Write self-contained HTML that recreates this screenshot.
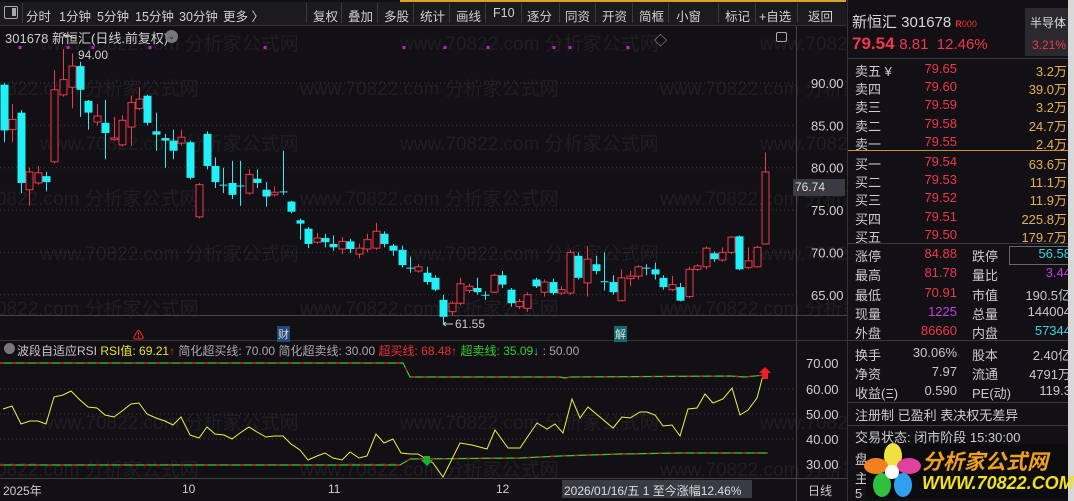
<!DOCTYPE html>
<html><head><meta charset="utf-8"><style>
*{margin:0;padding:0;box-sizing:border-box}
body{width:1074px;height:501px;background:#121014;overflow:hidden;position:relative;font-family:"Liberation Sans","Noto Sans CJK SC",sans-serif;color:#c8c8c8}
.a{position:absolute;white-space:nowrap}
#tb{left:0;top:0;width:846px;height:26px;background:#1b1b1d;border-bottom:1px solid #333}
#tb span{position:absolute;top:6px;font-size:12.5px;color:#d0d0d0}
.sep{position:absolute;top:3px;width:1px;height:20px;background:#3a3a3a}
.rp{font-size:13px}
.r{color:#f0384a}.y{color:#e8b050}.c{color:#30d8e8}.m{color:#c040e0}.w{color:#c8c8c8}
.hl{position:absolute;height:1px;background:#3a3a3a}
</style></head><body>
<div class="a" id="tb">
<div class="a" style="left:4px;top:6px;width:14px;height:13px;border:1.5px solid #aaa;border-radius:2px"><div style="position:absolute;right:1px;top:1px;width:4px;height:8px;background:#aaa"></div></div>
<div class="sep" style="left:22px"></div>
<span style="left:26px">分时</span><span style="left:59px">1分钟</span><span style="left:97px">5分钟</span><span style="left:135px">15分钟</span><span style="left:179px">30分钟</span><span style="left:223px">更多 〉</span>
<div class="sep" style="left:306px"></div><span style="left:313px">复权</span>
<div class="sep" style="left:341px"></div><span style="left:348px">叠加</span>
<div class="sep" style="left:377px"></div><span style="left:384px">多股</span>
<div class="sep" style="left:413px"></div><span style="left:420px">统计</span>
<div class="sep" style="left:449px"></div><span style="left:456px">画线</span>
<div class="sep" style="left:485px"></div><span style="left:493px">F10</span>
<div class="sep" style="left:521px"></div><span style="left:527px">逐分</span>
<div class="sep" style="left:559px"></div><span style="left:565px">同资</span>
<div class="sep" style="left:595px"></div><span style="left:602px">开资</span>
<div class="sep" style="left:632px"></div><span style="left:639px">简框</span>
<div class="sep" style="left:668px"></div><span style="left:676px">小窗</span>
<div class="sep" style="left:718px"></div><span style="left:725px">标记</span>
<div class="sep" style="left:755px"></div><span style="left:759px">+自选</span>
<div class="sep" style="left:797px"></div><span style="left:808px">返回</span>
</div>
<div class="a" style="left:0;top:0;width:846px;height:2px;background:linear-gradient(90deg,#121014 0 400px,#e0a030 400px 846px)"></div>

<svg class="a" style="left:0;top:26px" width="848" height="475" id="ch"></svg>

<div class="a" style="left:5px;top:28px;font-size:13px;color:#d0d0d0">301678 新恒汇(日线.前复权)</div>
<div class="a" style="left:165px;top:30px;width:13px;height:13px;border-radius:50%;background:#777;color:#222;font-size:9px;text-align:center;line-height:13px">⌄</div>
<div class="a" style="left:78px;top:48px;font-size:12px;color:#ccc">94.00</div>
<div class="a" style="left:455px;top:317px;font-size:12px;color:#ccc">61.55</div>
<div class="a" style="left:793px;top:179px;width:52px;height:17px;background:#3a3a44;font-size:12px;color:#ddd;padding:1px 2px">76.74</div>
<div class="a" style="left:133px;top:327px;font-size:11px;color:#f03030;font-weight:bold">⚠</div>
<div class="a" style="left:277px;top:326px;font-size:11px;color:#ddd;background:#204878;padding:0 1px">财</div>
<div class="a" style="left:614px;top:326px;font-size:11px;color:#ddd;background:#106870;padding:0 1px">解</div>

<div class="a" style="left:4px;top:343px;width:11px;height:11px;border-radius:50%;background:#777"></div>
<div class="a" style="left:17px;top:342px;font-size:12px"><span style="color:#c8c8c8">波段自适应RSI</span> <span style="color:#e8e030">RSI值: 69.21</span><span style="color:#f03030">↑</span> <span style="color:#a8a8a8">简化超买线: 70.00 简化超卖线: 30.00</span> <span style="color:#f03030">超买线: 68.48↑</span> <span style="color:#30d030">超卖线: 35.09</span><span style="color:#30c8e8">↓</span> <span style="color:#a8a8a8">: 50.00</span></div>

<div class="a" style="left:3px;top:482px;font-size:12px;color:#ccc">2025年</div>
<div class="a" style="left:182px;top:482px;font-size:12px;color:#ccc">10</div>
<div class="a" style="left:328px;top:482px;font-size:12px;color:#ccc">11</div>
<div class="a" style="left:496px;top:482px;font-size:12px;color:#ccc">12</div>
<div class="a" style="left:562px;top:480px;width:190px;height:18px;background:#3a3a44;font-size:12px;color:#ddd;padding:2px 2px">2026/01/16/五 1 至今涨幅12.46%</div>
<div class="a" style="left:808px;top:482px;font-size:12px;color:#ccc">日线</div>
<div class="a" style="left:654px;top:30px;font-size:13px;color:#aaa">◇</div>
<div class="a" style="left:776px;top:32px;width:11px;height:10px;border:1.3px solid #aaa;border-radius:2px"></div>

<!-- right panel -->
<div class="a" style="left:847px;top:0;width:227px;height:501px;background:#121014;border-left:1px solid #333"></div>
<div class="a" style="left:852px;top:11px;font-size:15px;color:#d8d8d8">新恒汇 301678 <span style="color:#f03030;font-size:9px;font-weight:bold">R</span><span style="color:#f03030;font-size:9px">000</span></div>
<div class="a" style="left:852px;top:34px;font-size:17px;color:#f0384a"><b>79.54</b> <span style="font-size:15px">8.81&nbsp; 12.46%</span></div>
<div class="a" style="left:1025px;top:8px;width:49px;height:48px;background:#2a2a2e"></div>
<div class="a" style="left:1030px;top:14px;font-size:12px;color:#ddd">半导体</div>
<div class="a" style="left:1032px;top:38px;font-size:12px;color:#f0384a">3.21%</div>
<div class="hl" style="left:848px;top:58px;width:226px"></div>
<div class="a rp" id="ob" style="left:855px;top:61px"></div>
<div class="a" style="left:848px;top:150px;width:220px;height:1px;background:#d09030"></div>
<div class="hl" style="left:848px;top:243px;width:220px"></div>
<div class="a" style="left:1009px;top:246px;width:60px;height:19px;border:1px solid #666"></div>
<div class="hl" style="left:848px;top:340px;width:220px"></div>
<div class="hl" style="left:848px;top:402px;width:220px"></div>
<div class="hl" style="left:848px;top:425px;width:220px"></div>
<div class="a" style="left:855px;top:405px;font-size:13px;color:#ccc">注册制 已盈利 表决权无差异</div>
<div class="a" style="left:855px;top:427px;font-size:13px;color:#ccc">交易状态: 闭市阶段 15:30:00</div>
<div class="a" style="left:855px;top:449px;font-size:13px;color:#ccc">盘</div>
<div class="a" style="left:855px;top:468px;font-size:13px;color:#ccc">主</div>
<div class="a" style="left:855px;top:486px;font-size:13px;color:#ccc">5</div>
<div class="a" style="left:1068px;top:0;width:6px;height:501px;background:#d8d8d8"></div>
<div class="a" style="left:866px;top:444px;width:202px;height:54px;background:#0c0c0c"></div>
<svg class="a" style="left:864px;top:443px" width="58" height="56">
<ellipse cx="29" cy="13" rx="9" ry="13" fill="#f0e040"/><ellipse cx="45" cy="23" rx="12" ry="8" fill="#e040a0"/><ellipse cx="39" cy="42" rx="9" ry="12" fill="#30a0f0"/><ellipse cx="18" cy="42" rx="9" ry="12" fill="#30c040"/><ellipse cx="12" cy="23" rx="12" ry="8" fill="#f08020"/><circle cx="28" cy="29" r="7" fill="#fff"/></svg>
<div class="a" style="left:922px;top:446px;font-size:21px;font-weight:bold;color:#f0a020;font-style:italic">分析家公式网</div>
<div class="a" style="left:922px;top:473px;font-size:18px;font-weight:bold;color:#f0e020;font-style:italic">WWW.70822.COM</div>

<script>
var ob=[["卖五 ¥","79.65","3.2万"],["卖四","79.60","39.0万"],["卖三","79.59","3.2万"],["卖二","79.58","24.7万"],["卖一","79.55","2.4万"],["买一","79.54","63.6万"],["买二","79.53","11.1万"],["买三","79.52","11.9万"],["买四","79.51","225.8万"],["买五","79.50","179.7万"]];
var h="";ob.forEach(function(r,i){var t=61+i*18.2+(i>=5?2:0)-61;h+='<div style="position:absolute;top:'+t+'px;left:0;color:#ccc">'+r[0]+'</div><div style="position:absolute;top:'+t+'px;left:62px;width:40px;text-align:right" class="r">'+r[1]+'</div><div style="position:absolute;top:'+t+'px;left:130px;width:82px;text-align:right" class="y">'+r[2]+'</div>';});
var st=[["涨停","84.88","r","跌停","56.58","c"],["最高","81.78","r","量比","3.44","m"],["最低","70.91","r","市值","190.5亿","w"],["现量","1225","m","总量","144004","w"],["外盘","86660","r","内盘","57344","c"],["换手","30.06%","w","股本","2.40亿","w"],["净资","7.97","w","流通","4791万","w"],["收益(Ξ)","0.590","w","PE(动)","119.3","w"]];
st.forEach(function(r,i){var t=246+i*19.3+(i>=5?2:0)-61;h+='<div style="position:absolute;top:'+t+'px;left:0;color:#ccc">'+r[0]+'</div><div style="position:absolute;top:'+t+'px;left:52px;width:50px;text-align:right" class="'+r[2]+'">'+r[1]+'</div><div style="position:absolute;top:'+t+'px;left:117px;color:#ccc">'+r[3]+'</div><div style="position:absolute;top:'+t+'px;left:150px;width:66px;text-align:right;overflow:hidden" class="'+r[5]+'">'+r[4]+'</div>';});
document.getElementById('ob').innerHTML=h;

var C=[[4,89.8,84.4,90,83],[12,84.5,85.7,87.5,83],[21,86.5,78.2,86.8,77],[29,77.4,79.5,80,75.5],[38,78.2,79.4,80.2,78],[46,79,78.3,79.5,77.2],[54,80.7,89.2,91.5,80.5],[63,88.6,90.4,94,88.4],[72,89.5,92,93.5,87],[80,92,89.2,92.5,86],[88,87.9,86.5,88,84.5],[97,85.4,86.1,87.5,85],[105,85.3,84.1,88,81],[114,83.3,83.5,86,83.2],[122,82.7,85.6,86.2,82.5],[131,84.8,87.7,88.5,82.6],[139,87,88.1,89.5,86.8],[147,88.5,85.3,88.6,85],[156,84.3,83.9,86.5,82],[165,83.5,83.2,84,80],[173,83.2,82,84.5,81],[181,82.9,83.6,84.5,82.6],[190,83,78.8,83.2,78.6],[199,74.2,78,78.2,74],[207,84,80.2,84.3,79.8],[215,80.2,78.3,81.2,77.6],[223,78,78,80,77],[232,78.2,76.8,80.8,76.3],[240,77.9,77.9,80.8,75.5],[249,77,79.2,79.8,76.8],[257,78.7,78.2,79.8,77.6],[266,77.4,76.6,78.3,75.4],[274,76.8,77.1,77.8,76.6],[283,77.2,77.2,82,76.8],[291,76,74.8,76.1,74.6],[300,73.8,73.4,74,71.5],[308,72.8,71,73,70.5],[317,71.2,71.7,72.3,71],[325,71.7,71.2,72.2,70.6],[333,71,70.6,72,70.2],[342,70.4,71.3,71.8,69.8],[350,71.3,70.4,71.6,69.9],[359,69.8,70.5,71,69.3],[367,70.4,71.5,72.2,70],[376,70.5,72.5,73.5,70.3],[384,72.2,71,72.5,70.6],[393,70.8,70.2,71,69.6],[402,70.3,68.5,70.8,68.2],[410,68.2,68.2,69.5,67.6],[418,67.8,68.3,68.6,67.6],[427,67.6,66.5,68.3,66.2],[435,67,65.6,67.3,65.4],[443,64.4,62.4,65,61.55],[452,63,64,64.2,62.5],[460,64,66.3,67,63.8],[469,65.5,66,66.3,65.2],[477,65.8,65.3,67,65],[485,65,65,65.4,64.4],[494,65.3,67.3,67.5,65.2],[502,67.3,66.2,67.8,65.8],[511,65.6,64,65.8,63.6],[519,63.6,64.2,64.5,63.3],[527,63.4,65,65.3,63],[536,66.8,66,67,65.8],[544,65.3,66.5,66.8,64.8],[553,66.5,65.2,66.9,65],[561,65.2,65.6,66,65],[570,65.2,70,70.3,65],[578,69.6,67,70,66.8],[587,66.4,69.2,70.7,64.8],[596,68.6,67.8,69.6,67.4],[604,66.6,66.6,70,65.5],[613,66.5,65.3,67.3,65],[621,64.3,67,68,64.2],[630,66.9,67.2,67.8,66],[638,67.2,68.3,68.5,66.8],[646,68.2,68.2,68.6,67.3],[655,68,67.4,68.8,66.8],[663,67,65.9,67.3,65.6],[672,65.6,66.2,67.2,65.4],[680,65.9,64.3,66.4,64.2],[689,64.8,68,68.3,64.6],[697,68,68.4,68.6,67.8],[706,68.3,70.5,70.7,68],[714,69.9,69.2,70.1,68.9],[722,69.1,70,70.6,68.9],[731,70,71.8,71.9,69.8],[739,71.9,68,72,67.9],[748,68.2,69,70.6,68],[757,68.3,70.6,70.8,68.2],[765,71,79.5,81.78,70.91]];
function Y(p){return 57+(90-p)*8.47}
var s='';
var wm='www.70822.com 分析家公式网';
[12,57,112,167,222,277,391,438].forEach(function(y,i){var off=(i%2)?-60:40;for(var k=0;k<3;k++)s+='<text x="'+(off+k*360)+'" y="'+(y+12)+'" font-size="19" fill="#1f1e22" font-family="Liberation Sans,Noto Sans CJK SC,sans-serif">'+wm+'</text>';});
[90,85,80,75,70,65].forEach(function(p){s+='<line x1="0" x2="796" y1="'+Y(p)+'" y2="'+Y(p)+'" stroke="#3a3a3a" stroke-dasharray="1 3"/>';s+='<text x="811" y="'+(Y(p)+5)+'" font-size="13" fill="#d0d0d0" font-family="Liberation Sans,sans-serif">'+p+'.00</text>';});
s+='<line x1="796.5" x2="796.5" y1="0" y2="475" stroke="#444"/>';
s+='<line x1="0" x2="848" y1="289.5" y2="289.5" stroke="#444"/>';
s+='<line x1="0" x2="848" y1="314.5" y2="314.5" stroke="#333"/>';
s+='<line x1="0" x2="848" y1="452.5" y2="452.5" stroke="#444"/>';
[[60,363],[50,388],[40,413]].forEach(function(a){s+='<line x1="0" x2="796" y1="'+a[1]+'" y2="'+a[1]+'" stroke="#3a3a3a" stroke-dasharray="1 3"/>';});
[[70,337],[60,363],[50,388],[40,413],[30,438]].forEach(function(a){s+='<text x="806" y="'+(a[1]+5)+'" font-size="13" fill="#d0d0d0" font-family="Liberation Sans,sans-serif">'+a[0]+'.00</text>';});
[20,68,93,150,265,404,445,488,554,570,628].forEach(function(x){s+='<rect x="'+(x-1.5)+'" y="20" width="3" height="3" fill="#c020d0"/>';});
C.forEach(function(c){var x=c[0],o=c[1],cl=c[2],hi=c[3],lo=c[4];var up=cl>o;var col=up?'#f0384a':'#20f0f8';var t=Y(Math.max(o,cl)),b=Y(Math.min(o,cl));var hh=Math.max(b-t,1);
s+='<line x1="'+(x+.5)+'" x2="'+(x+.5)+'" y1="'+Y(hi)+'" y2="'+Y(lo)+'" stroke="'+col+'"/>';
if(up)s+='<rect x="'+(x-3)+'" y="'+t+'" width="7" height="'+hh+'" fill="#121014" stroke="'+col+'"/>';else s+='<rect x="'+(x-3.5)+'" y="'+t+'" width="8" height="'+hh+'" fill="'+col+'"/>';});
s+='<path d="M63 9 L66 7 M63 9 l4 2 M64 9 L76 12" stroke="#ccc" fill="none"/><path d="M443 298 h10 M443 298 l3 -2 M443 298 l3 2" stroke="#ccc" fill="none"/>';
var R=[[3,409],[12,406],[21,424],[30,421],[38,421],[46,424],[54,397],[63,395],[71,391],[80,400],[88,407],[97,408],[105,415],[114,417],[122,411],[131,404],[139,403],[147,414],[156,418],[165,421],[173,425],[181,417],[190,435],[199,438],[207,427],[215,434],[224,435],[232,439],[240,433],[249,427],[257,432],[266,437],[274,436],[283,436],[291,444],[300,450],[308,460],[317,456],[325,453],[333,458],[342,460],[350,452],[359,458],[367,456],[376,434],[384,443],[393,439],[401,453],[410,454],[418,454],[433,463],[443,477],[460,443],[472,445],[487,449],[495,430],[508,448],[520,448],[537,423],[547,429],[555,424],[563,433],[572,399],[580,418],[588,407],[613,428],[622,417],[630,418],[640,412],[647,412],[655,415],[663,426],[672,425],[680,436],[688,409],[697,408],[705,394],[713,403],[723,399],[732,388],[740,415],[748,410],[757,398],[765,368]];
var p='M'+R.map(function(a){return a[0]+' '+(a[1]-26)}).join(' L');
function dl(d){return '<path d="'+d+'" stroke="#30d030" fill="none" stroke-width="1.2"/><path d="'+d+'" stroke="#e02020" fill="none" stroke-width="1.2" stroke-dasharray="4 8"/>';}
s+=dl('M0 337 L403 337 L410 351 L560 351 L565 352 L570 351 L730 350 L745 351 L765 349');
s+=dl('M0 439 L400 439 L410 433 L520 432 L560 430 L620 428 L680 427 L768 427');
s+='<path d="'+p+'" stroke="#f0f040" fill="none" stroke-width="1"/>';
s+='<path d="M424 430 h6 v4 h3 l-6 6 l-6 -6 h3z" fill="#20b030"/><path d="M765 341 l6 6 h-3 v6 h-6 v-6 h-3z" fill="#f02020"/>';
document.getElementById('ch').innerHTML=s;
</script>
</body></html>
